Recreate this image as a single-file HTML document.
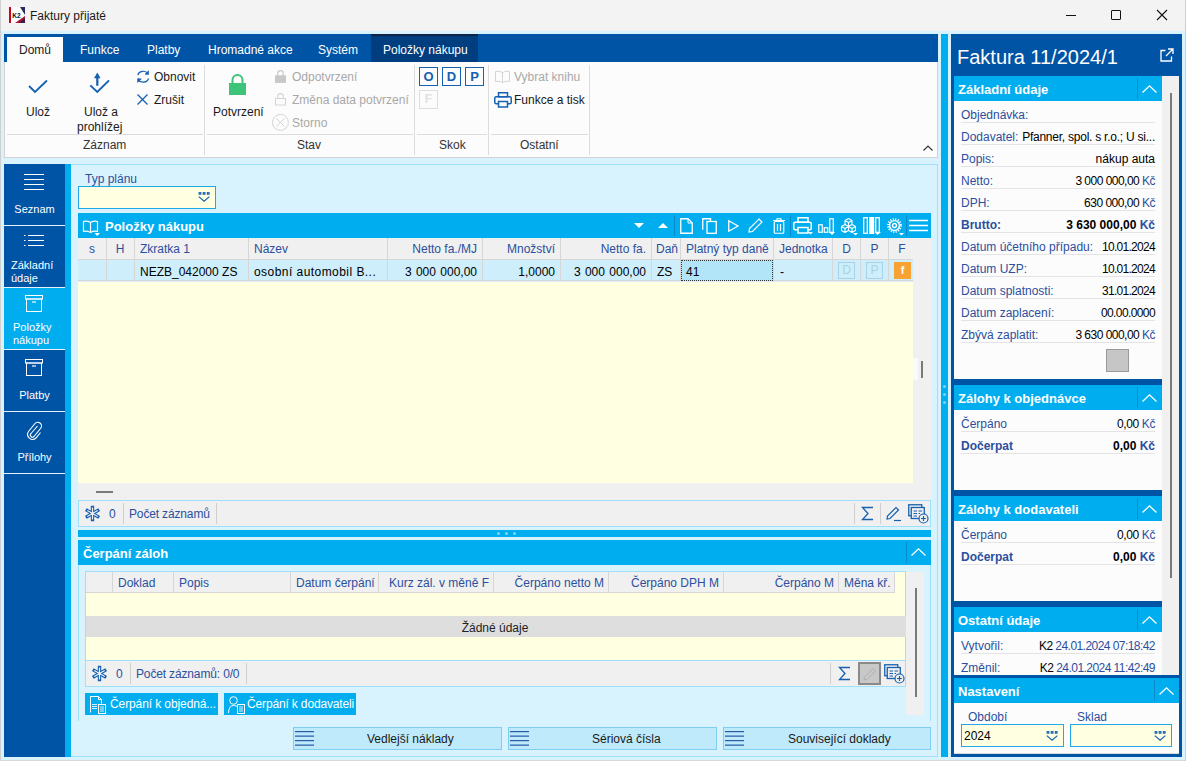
<!DOCTYPE html>
<html><head><meta charset="utf-8">
<style>
*{box-sizing:border-box;margin:0;padding:0}
html,body{width:1186px;height:761px;overflow:hidden;background:#d9f3fe;font-family:"Liberation Sans",sans-serif;font-size:12px;color:#000}
.a{position:absolute}
.t{position:absolute;white-space:nowrap;line-height:14px}
.w{color:#fff}
.b{font-weight:bold}
.lb{color:#2b4f9e}
.gr{color:#a8a8a8}
.lb2{color:#2b4f9e}
svg{position:absolute;overflow:visible}
</style></head><body>
<!-- window frame -->
<div class="a" style="left:0;top:0;width:1186px;height:31px;background:#f3f3f3"></div>
<div class="a" style="left:0;top:31px;width:1186px;height:730px;background:#d9f3fe"></div>
<div class="a" style="left:0;top:760px;width:1186px;height:1px;background:#d8d8d8"></div>
<div class="a" style="left:0;top:0;width:1px;height:761px;background:#cfcfcf"></div>
<div class="a" style="left:1185px;top:0;width:1px;height:761px;background:#cfcfcf"></div>

<!-- title -->
<svg style="left:9px;top:7px" width="16" height="16"><rect width="16" height="16" fill="#fff"/><rect width="2" height="16" fill="#d0021b"/><path d="M11 0H16V8Z" fill="#2b2a5e"/><path d="M16 9V16H6Z" fill="#b0102a"/><path d="M16 11V16H10Z" fill="#3a1f4a"/><text x="3.3" y="10.5" font-family="Liberation Sans" font-weight="bold" font-size="6.5" fill="#111">K2</text></svg>
<div class="t" style="left:30px;top:9px;color:#1a1a1a">Faktury přijaté</div>
<div class="a" style="left:1066px;top:15px;width:10px;height:1px;background:#111"></div>
<div class="a" style="left:1111px;top:10px;width:10px;height:10px;border:1px solid #111;border-radius:1px"></div>
<svg style="left:1157px;top:10px" width="10" height="10"><path d="M0 0L10 10M10 0L0 10" stroke="#111" stroke-width="1.1"/></svg>

<!-- ribbon tabs -->
<div class="a" style="left:4px;top:34px;width:934px;height:28px;background:#0054a6"></div>
<div class="a" style="left:7px;top:37px;width:56px;height:25px;background:#fcfcfc"></div>
<div class="a" style="left:371px;top:34px;width:107px;height:28px;background:#003e80;border-top:2px solid #0c2448"></div>
<div class="t" style="left:19px;top:43px;color:#1a1a1a">Domů</div>
<div class="t w" style="left:80px;top:43px">Funkce</div>
<div class="t w" style="left:147px;top:43px">Platby</div>
<div class="t w" style="left:208px;top:43px">Hromadné akce</div>
<div class="t w" style="left:318px;top:43px">Systém</div>
<div class="t w" style="left:383px;top:43px">Položky nákupu</div>

<!-- ribbon body -->
<div class="a" style="left:4px;top:62px;width:934px;height:96px;background:#fcfcfc;border:1px solid #d2d2d2;border-top:none"></div>
<!-- Zaznam group -->
<svg style="left:28px;top:79px" width="20" height="15"><path d="M1 7L7 13L19 1.5" fill="none" stroke="#1560b0" stroke-width="1.8"/></svg>
<div class="t" style="left:26px;top:105px;color:#1a1a1a">Ulož</div>
<svg style="left:88px;top:72px" width="22" height="22"><path d="M9.3 0.5L6 6.3H12.6Z" fill="#1560b0"/><path d="M9.3 5.5V13.8" stroke="#1560b0" stroke-width="2.2"/><path d="M2.3 13.4L9.3 20L21 8.3" fill="none" stroke="#1560b0" stroke-width="1.9"/></svg>
<div class="t" style="left:84px;top:105px;color:#1a1a1a">Ulož a</div>
<div class="t" style="left:77px;top:120px;color:#1a1a1a">prohlížej</div>
<svg style="left:137px;top:70px" width="13" height="13"><path d="M0.8 5A5.6 4.8 0 0 1 11 3.5M11.5 8.5A5.6 4.8 0 0 1 1.2 9.8" fill="none" stroke="#1560b0" stroke-width="1.2"/><path d="M11.6 0.8L11.6 4.5L8 4.2Z M0.6 12.4L0.6 8.6L4.3 9Z" fill="#1560b0" stroke="#1560b0" stroke-width="0.6"/></svg>
<div class="t" style="left:154px;top:70px;color:#1a1a1a">Obnovit</div>
<svg style="left:137px;top:94px" width="11" height="11"><path d="M0.5 0.5L10.5 10.5M10.5 0.5L0.5 10.5" stroke="#1560b0" stroke-width="1.3"/></svg>
<div class="t" style="left:154px;top:93px;color:#1a1a1a">Zrušit</div>
<div class="a" style="left:7px;top:134px;width:196px;height:1px;background:#dcdcdc"></div>
<div class="t" style="left:83px;top:138px;color:#333">Záznam</div>
<div class="a" style="left:204px;top:65px;width:1px;height:90px;background:#dcdcdc"></div>

<!-- Stav group -->
<svg style="left:228px;top:74px" width="19" height="22"><path d="M4.5 9V6A5 5 0 0 1 14.5 6V9" fill="none" stroke="#3ec479" stroke-width="2"/><rect x="1" y="9" width="17" height="12" fill="#3ec479"/></svg>
<div class="t" style="left:213px;top:105px;color:#1a1a1a">Potvrzení</div>
<svg style="left:275px;top:70px" width="12" height="14"><path d="M2.8 6V3.3A2.7 2.7 0 0 1 8.2 3.3V6" fill="none" stroke="#c8c8c8" stroke-width="1.2"/><rect x="0" y="5.3" width="11" height="7.6" fill="#c8c8c8"/></svg>
<div class="t gr" style="left:292px;top:70px">Odpotvrzení</div>
<svg style="left:275px;top:93px" width="12" height="14"><path d="M2.8 5.5V3.3A2.7 2.7 0 0 1 8.2 3.3V5.5" fill="none" stroke="#d4d4d4" stroke-width="1.1"/><rect x="0.5" y="5.5" width="10" height="6.5" fill="none" stroke="#d4d4d4" stroke-width="1"/></svg>
<div class="t gr" style="left:292px;top:93px">Změna data potvrzení</div>
<svg style="left:272px;top:114px" width="18" height="18"><circle cx="8.4" cy="8.4" r="8" fill="none" stroke="#d4d4d4" stroke-width="1"/><path d="M4.2 4.2L12.6 12.6M12.6 4.2L4.2 12.6" stroke="#d4d4d4" stroke-width="1"/></svg>
<div class="t gr" style="left:292px;top:116px">Storno</div>
<div class="a" style="left:207px;top:134px;width:206px;height:1px;background:#dcdcdc"></div>
<div class="t" style="left:297px;top:138px;color:#333">Stav</div>
<div class="a" style="left:414px;top:65px;width:1px;height:90px;background:#dcdcdc"></div>

<!-- Skok -->
<div class="a" style="left:419px;top:67px;width:19px;height:19px;border:1.5px solid #1560b0;color:#1560b0;font-weight:bold;font-size:13px;line-height:17px;text-align:center">O</div>
<div class="a" style="left:442px;top:67px;width:19px;height:19px;border:1.5px solid #1560b0;color:#1560b0;font-weight:bold;font-size:13px;line-height:17px;text-align:center">D</div>
<div class="a" style="left:465px;top:67px;width:19px;height:19px;border:1.5px solid #1560b0;color:#1560b0;font-weight:bold;font-size:13px;line-height:17px;text-align:center">P</div>
<div class="a" style="left:419px;top:90px;width:19px;height:19px;border:1px solid #dedede;color:#e0e0e0;font-weight:bold;font-size:12px;line-height:17px;text-align:center">F</div>
<div class="a" style="left:417px;top:134px;width:70px;height:1px;background:#dcdcdc"></div>
<div class="t" style="left:439px;top:138px;color:#333">Skok</div>
<div class="a" style="left:488px;top:65px;width:1px;height:90px;background:#dcdcdc"></div>

<!-- Ostatni -->
<svg style="left:495px;top:70px" width="15" height="13"><path d="M7.5 2.5Q4 0.5 0.5 1.5V11.5Q4 10.5 7.5 12.5Q11 10.5 14.5 11.5V1.5Q11 0.5 7.5 2.5V12.5" fill="none" stroke="#d4d4d4" stroke-width="1"/></svg>
<div class="t gr" style="left:514px;top:70px">Vybrat knihu</div>
<svg style="left:494px;top:92px" width="18" height="16"><rect x="4.5" y="0.75" width="9" height="4" fill="none" stroke="#1560b0" stroke-width="1.5"/><rect x="0.75" y="4.75" width="16.5" height="7" rx="1.5" fill="none" stroke="#1560b0" stroke-width="1.5"/><rect x="4.5" y="9.5" width="9" height="5.5" fill="#fcfcfc" stroke="#1560b0" stroke-width="1.5"/></svg>
<div class="t" style="left:514px;top:93px;color:#1a1a1a">Funkce a tisk</div>
<div class="a" style="left:491px;top:134px;width:97px;height:1px;background:#dcdcdc"></div>
<div class="t" style="left:520px;top:138px;color:#333">Ostatní</div>
<div class="a" style="left:589px;top:65px;width:1px;height:90px;background:#dcdcdc"></div>
<svg style="left:923px;top:145px" width="10" height="6"><path d="M0.5 5.5L5 1L9.5 5.5" fill="none" stroke="#333" stroke-width="1.1"/></svg>


<!-- left nav -->
<div class="a" style="left:4px;top:164px;width:61px;height:593px;background:#0054a6"></div>
<div class="a" style="left:65px;top:164px;width:6px;height:593px;background:#00aeef"></div>

<!-- left nav items -->
<div class="a" style="left:4px;top:225px;width:61px;height:1px;background:#e8f2fa"></div>
<div class="a" style="left:4px;top:287px;width:61px;height:1px;background:#e8f2fa"></div>
<div class="a" style="left:4px;top:288px;width:61px;height:61px;background:#00aeef"></div>
<div class="a" style="left:4px;top:349px;width:61px;height:1px;background:#e8f2fa"></div>
<div class="a" style="left:4px;top:411px;width:61px;height:1px;background:#e8f2fa"></div>
<div class="a" style="left:4px;top:473px;width:61px;height:1px;background:#e8f2fa"></div>
<svg style="left:24px;top:174px" width="20" height="17"><path d="M0 0.5H20M0 5.5H20M0 10.5H20M0 15.5H20" stroke="#fff" stroke-width="1"/></svg>
<div class="t w" style="left:4px;top:202px;width:61px;text-align:center;font-size:11px">Seznam</div>
<svg style="left:24px;top:235px" width="20" height="12"><path d="M4 0.5H20M4 5.5H20M4 10.5H20" stroke="#fff" stroke-width="1"/><path d="M0 0.5H1.5M0 5.5H1.5M0 10.5H1.5" stroke="#fff" stroke-width="1"/></svg>
<div class="t w" style="left:11px;top:258px;font-size:11px">Základní</div>
<div class="t w" style="left:11px;top:271px;font-size:11px">údaje</div>
<svg style="left:25px;top:295px" width="18" height="17"><rect x="0.5" y="0.5" width="17" height="3.5" fill="none" stroke="#fff" stroke-width="1"/><rect x="1.5" y="4" width="15" height="12.5" fill="none" stroke="#fff" stroke-width="1"/><path d="M7 7H11" stroke="#fff" stroke-width="1.2"/></svg>
<div class="t w" style="left:13px;top:320px;font-size:11px">Položky</div>
<div class="t w" style="left:13px;top:333px;font-size:11px">nákupu</div>
<svg style="left:25px;top:359px" width="18" height="17"><rect x="0.5" y="0.5" width="17" height="3.5" fill="none" stroke="#fff" stroke-width="1"/><rect x="1.5" y="4" width="15" height="12.5" fill="none" stroke="#fff" stroke-width="1"/><path d="M7 7H11" stroke="#fff" stroke-width="1.2"/></svg>
<div class="t w" style="left:4px;top:388px;width:61px;text-align:center;font-size:11px">Platby</div>
<svg style="left:26px;top:421px" width="17" height="19"><path d="M11.5 5L5 12.5A2 2 0 0 0 8 15.5L14.5 7.5A3.6 3.6 0 0 0 9 2.5L2.5 10.5A5 5 0 0 0 10 17L14.5 11.5" fill="none" stroke="#fff" stroke-width="1.1"/></svg>
<div class="t w" style="left:4px;top:450px;width:61px;text-align:center;font-size:11px">Přílohy</div>

<!-- form: typ planu -->
<div class="t lb" style="left:85px;top:172px">Typ plánu</div>
<div class="a" style="left:78px;top:186px;width:138px;height:23px;background:#ffffe1;border:1px solid #22a7e8"></div>
<svg style="left:198px;top:192px" width="13" height="11"><path d="M0.6 0H3.4V2.8H0.6ZM4.7 0H7.5V2.8H4.7ZM8.8 0H11.6V2.8H8.8Z" fill="#1560b0"/><path d="M1.5 1H2.5M5.6 1H6.6M9.7 1H10.7" stroke="#8fb7e0" stroke-width="0.8"/><path d="M0.8 4.6L6.1 9.2L11.4 4.6" fill="none" stroke="#1560b0" stroke-width="1.2"/></svg>

<!-- grid panel -->
<div class="a" style="left:78px;top:213px;width:853px;height:25px;background:#00aeef"></div>
<svg style="left:83px;top:220px" width="17" height="16"><path d="M7.5 2.5Q4 0.5 0.5 1.5V11.5Q4 10.5 7.5 12.5Q11 10.5 14.5 11.5V1.5Q11 0.5 7.5 2.5V12.5" fill="none" stroke="#fff" stroke-width="1.2"/><path d="M11.5 13H17L14.25 16Z" fill="#fff"/></svg>
<div class="t w b" style="left:105px;top:220px;font-size:13px">Položky nákupu</div>
<svg style="left:634px;top:223px" width="10" height="6"><path d="M0 0H10L5 5Z" fill="#fff"/></svg>
<svg style="left:658px;top:223px" width="10" height="6"><path d="M0 5H10L5 0Z" fill="#fff"/></svg>
<div class="a" style="left:674px;top:215px;width:1px;height:21px;background:#0a8acb"></div>
<svg style="left:680px;top:218px" width="13" height="16"><path d="M0.75 0.75H8L12.25 5V15.25H0.75Z" fill="none" stroke="#fff" stroke-width="1.3"/><path d="M8 0.75V5H12.25" fill="none" stroke="#fff" stroke-width="1"/></svg>
<svg style="left:702px;top:218px" width="15" height="16"><path d="M0.75 11.75V0.75H8.5V3.5" fill="none" stroke="#fff" stroke-width="1.3"/><rect x="5" y="3.5" width="9.25" height="11.75" fill="none" stroke="#fff" stroke-width="1.3"/></svg>
<svg style="left:728px;top:220px" width="11" height="12"><path d="M0.75 0.75L10 6L0.75 11.25Z" fill="none" stroke="#fff" stroke-width="1.3"/></svg>
<svg style="left:748px;top:218px" width="15" height="15"><path d="M1 14L1.5 10.5L11 1L14 4L4.5 13.5Z" fill="none" stroke="#fff" stroke-width="1.2"/></svg>
<svg style="left:773px;top:218px" width="12" height="16"><path d="M0 2.5H12M4 2.5V0.75H8V2.5" fill="none" stroke="#fff" stroke-width="1.2"/><rect x="1.25" y="3.5" width="9.5" height="11.75" rx="1" fill="none" stroke="#fff" stroke-width="1.2"/><path d="M4.5 6V13M7.5 6V13" stroke="#fff" stroke-width="1.2"/></svg>
<div class="a" style="left:790px;top:215px;width:1px;height:21px;background:#0a8acb"></div>
<svg style="left:793px;top:217px" width="20" height="18"><rect x="5" y="0.75" width="10" height="4.5" fill="none" stroke="#fff" stroke-width="1.5"/><rect x="0.75" y="5.25" width="17.5" height="7.5" rx="1.5" fill="none" stroke="#fff" stroke-width="1.5"/><rect x="5" y="10.5" width="10" height="5.5" fill="#00aeef" stroke="#fff" stroke-width="1.5"/><path d="M15 15H20L17.5 17.5Z" fill="#fff"/></svg>
<svg style="left:818px;top:218px" width="18" height="17"><rect x="0.75" y="6.75" width="3.5" height="7.5" fill="none" stroke="#fff" stroke-width="1.2"/><rect x="6.25" y="9.75" width="3.5" height="4.5" fill="none" stroke="#fff" stroke-width="1.2"/><rect x="11.75" y="0.75" width="3.5" height="13.5" fill="none" stroke="#fff" stroke-width="1.2"/><path d="M11 14H17L14 17Z" fill="#fff"/></svg>
<svg style="left:841px;top:218px" width="18" height="18"><path d="M7.5 0.5L11.0 2.5V6.5L7.5 8.5L4.0 6.5V2.5Z M4.0 2.5L7.5 4.5L11.0 2.5M7.5 4.5V8.5 M4 6.5L7.5 8.5V12.5L4 14.5L0.5 12.5V8.5Z M0.5 8.5L4 10.5L7.5 8.5M4 10.5V14.5 M11 6.5L14.5 8.5V12.5L11 14.5L7.5 12.5V8.5Z M7.5 8.5L11 10.5L14.5 8.5M11 10.5V14.5" fill="none" stroke="#fff" stroke-width="1.1" stroke-linejoin="round"/><path d="M12 15H17L14.5 17.5Z" fill="#fff"/></svg>
<svg style="left:863px;top:217px" width="19" height="19"><rect x="0.7" y="0.7" width="3.6" height="15.6" fill="none" stroke="#fff" stroke-width="1.3"/><rect x="6.2" y="0" width="5" height="17" fill="#fff"/><rect x="12.7" y="0.7" width="3.6" height="14.6" fill="none" stroke="#fff" stroke-width="1.3"/><path d="M11.5 15H18L14.5 18Z" fill="#fff"/></svg>
<svg style="left:887px;top:218px" width="18" height="18"><circle cx="7.5" cy="7.5" r="6.4" fill="none" stroke="#fff" stroke-width="2" stroke-dasharray="1.1 1.41"/><circle cx="7.5" cy="7.5" r="4.9" fill="none" stroke="#fff" stroke-width="1.4"/><circle cx="7.5" cy="7.5" r="2" fill="none" stroke="#fff" stroke-width="1.3"/><path d="M12 15H17L14.5 17.5Z" fill="#fff"/></svg>
<div class="a" style="left:906px;top:215px;width:1px;height:21px;background:#0a8acb"></div>
<svg style="left:909px;top:219px" width="19" height="13"><path d="M0 1.5H19M0 6.5H19M0 11.5H19" stroke="#fff" stroke-width="1.3"/></svg>

<!-- grid header row -->
<div class="a" style="left:78px;top:238px;width:835px;height:22px;background:#f0f0f0;border-bottom:1px solid #d6d6d6"></div>
<div class="a" style="left:78px;top:260px;width:835px;height:21px;background:#cdeefa;border-bottom:1px solid #d6d6d6"></div>
<div class="a" style="left:78px;top:282px;width:835px;height:201px;background:#ffffe1"></div>
<!-- column separators -->
<div class="a" style="left:106px;top:238px;width:1px;height:43px;background:#d6d6d6"></div>
<div class="a" style="left:134px;top:238px;width:1px;height:43px;background:#d6d6d6"></div>
<div class="a" style="left:248px;top:238px;width:1px;height:43px;background:#d6d6d6"></div>
<div class="a" style="left:387px;top:238px;width:1px;height:43px;background:#d6d6d6"></div>
<div class="a" style="left:482px;top:238px;width:1px;height:43px;background:#d6d6d6"></div>
<div class="a" style="left:560px;top:238px;width:1px;height:43px;background:#d6d6d6"></div>
<div class="a" style="left:651px;top:238px;width:1px;height:43px;background:#d6d6d6"></div>
<div class="a" style="left:680px;top:238px;width:1px;height:43px;background:#d6d6d6"></div>
<div class="a" style="left:773px;top:238px;width:1px;height:43px;background:#d6d6d6"></div>
<div class="a" style="left:832px;top:238px;width:1px;height:43px;background:#d6d6d6"></div>
<div class="a" style="left:860px;top:238px;width:1px;height:43px;background:#d6d6d6"></div>
<div class="a" style="left:888px;top:238px;width:1px;height:43px;background:#d6d6d6"></div>
<div class="t lb" style="left:78px;top:242px;width:28px;text-align:center">s</div>
<div class="t lb" style="left:106px;top:242px;width:28px;text-align:center">H</div>
<div class="t lb" style="left:140px;top:242px">Zkratka 1</div>
<div class="t lb" style="left:254px;top:242px">Název</div>
<div class="t lb" style="left:388px;top:242px;width:89px;text-align:right">Netto fa./MJ</div>
<div class="t lb" style="left:483px;top:242px;width:72px;text-align:right">Množství</div>
<div class="t lb" style="left:561px;top:242px;width:85px;text-align:right">Netto fa.</div>
<div class="t lb" style="left:656px;top:242px">Daň</div>
<div class="t lb" style="left:686px;top:242px">Platný typ daně</div>
<div class="t lb" style="left:779px;top:242px">Jednotka</div>
<div class="t lb" style="left:833px;top:242px;width:27px;text-align:center">D</div>
<div class="t lb" style="left:861px;top:242px;width:27px;text-align:center">P</div>
<div class="t lb" style="left:889px;top:242px;width:26px;text-align:center">F</div>
<!-- row -->
<div class="a" style="left:681px;top:260px;width:92px;height:21px;background:#b3e5f8;border:1px dotted #333"></div>
<div class="t" style="left:140px;top:265px">NEZB_042000 ZS</div>
<div class="t" style="left:254px;top:265px;letter-spacing:0.45px">osobní automobil B...</div>
<div class="t" style="left:388px;top:265px;width:89px;text-align:right;word-spacing:1px">3 000 000,00</div>
<div class="t" style="left:483px;top:265px;width:72px;text-align:right">1,0000</div>
<div class="t" style="left:561px;top:265px;width:85px;text-align:right;word-spacing:1px">3 000 000,00</div>
<div class="t" style="left:657px;top:265px">ZS</div>
<div class="t" style="left:686px;top:265px">41</div>
<div class="t" style="left:780px;top:265px">-</div>
<div class="a" style="left:838px;top:262px;width:17px;height:17px;border:1px solid #a9d3e4;color:#a9d3e4;font-size:12px;line-height:15px;text-align:center">D</div>
<div class="a" style="left:866px;top:262px;width:17px;height:17px;border:1px solid #a9d3e4;color:#a9d3e4;font-size:12px;line-height:15px;text-align:center">P</div>
<div class="a" style="left:894px;top:262px;width:17px;height:17px;background:#f7a233;color:#fff;font-weight:bold;font-size:11px;line-height:17px;text-align:center">f</div>

<!-- scrollbars -->
<div class="a" style="left:913px;top:238px;width:18px;height:262px;background:#f0f0f0"></div>
<div class="a" style="left:913px;top:358px;width:5px;height:22px;background:#fafafa"></div>
<div class="a" style="left:921px;top:361px;width:2px;height:17px;background:#7a7a7a"></div>
<div class="a" style="left:78px;top:483px;width:835px;height:17px;background:#f0f0f0"></div>
<div class="a" style="left:96px;top:491px;width:17px;height:2px;background:#7a7a7a"></div>
<!-- footer -->
<div class="a" style="left:78px;top:500px;width:853px;height:27px;background:#f0f0f0;border:1px solid #9edff9"></div>
<svg style="left:85px;top:506px" width="16" height="16"><path d="M7.50 1.50L7.50 13.50M12.70 4.50L2.30 10.50M12.70 10.50L2.30 4.50" stroke="#1560b0" stroke-width="3.4" stroke-linecap="square"/><path d="M7.50 1.50L7.50 13.50M12.70 4.50L2.30 10.50M12.70 10.50L2.30 4.50" stroke="#f0f0f0" stroke-width="1.2" stroke-linecap="butt"/><circle cx="7.5" cy="7.5" r="1.3" fill="#f0f0f0"/></svg>
<div class="t lb" style="left:109px;top:507px">0</div>
<div class="a" style="left:123px;top:503px;width:1px;height:21px;background:#cfcfcf"></div>
<div class="t lb" style="left:129px;top:507px;letter-spacing:-0.15px">Počet záznamů</div>
<div class="a" style="left:216px;top:503px;width:1px;height:21px;background:#cfcfcf"></div>
<div class="a" style="left:854px;top:503px;width:1px;height:21px;background:#cfcfcf"></div>
<svg style="left:861px;top:506px" width="13" height="15"><path d="M12 1.5H1.5L7 7.5L1.5 13.5H12" fill="none" stroke="#1560b0" stroke-width="1.3"/></svg>
<div class="a" style="left:880px;top:503px;width:1px;height:21px;background:#cfcfcf"></div>
<svg style="left:886px;top:506px" width="16" height="16"><path d="M1 13L1.5 10L10 1.5L12.5 4L4 12.5Z" fill="none" stroke="#1560b0" stroke-width="1.2"/><path d="M8 14.5H15" stroke="#1560b0" stroke-width="1.2"/></svg>
<svg style="left:908px;top:504px" width="21" height="20"><rect x="0.75" y="0.75" width="13" height="11" fill="none" stroke="#1560b0" stroke-width="1.3"/><rect x="3.25" y="3.5" width="13" height="11" fill="#f0f0f0" stroke="#1560b0" stroke-width="1.3"/><path d="M5.5 7H9M5.5 9.5H9M5.5 12H9M10.5 7H14M10.5 9.5H12" stroke="#1560b0" stroke-width="1"/><circle cx="15.5" cy="14.5" r="4.5" fill="#f0f0f0" stroke="#1560b0" stroke-width="1.2"/><path d="M15.5 12V17M13 14.5H18" stroke="#1560b0" stroke-width="1.2"/></svg>

<!-- splitter -->
<div class="a" style="left:78px;top:530px;width:853px;height:7px;background:#00aeef"></div>
<div class="a" style="left:497px;top:532px;width:3px;height:3px;border-radius:2px;background:#7dd3f5"></div>
<div class="a" style="left:505px;top:532px;width:3px;height:3px;border-radius:2px;background:#7dd3f5"></div>
<div class="a" style="left:513px;top:532px;width:3px;height:3px;border-radius:2px;background:#7dd3f5"></div>

<!-- cerpani zaloh -->
<div class="a" style="left:78px;top:540px;width:853px;height:25px;background:#00aeef"></div>
<div class="t w b" style="left:83px;top:547px;font-size:13px">Čerpání záloh</div>
<div class="a" style="left:906px;top:542px;width:1px;height:21px;background:#0a8acb"></div>
<svg style="left:911px;top:548px" width="15" height="8"><path d="M0.5 7.5L7.5 0.8L14.5 7.5" fill="none" stroke="#fff" stroke-width="1.3"/></svg>
<div class="a" style="left:78px;top:565px;width:1px;height:156px;background:#9edff9"></div>
<div class="a" style="left:930px;top:565px;width:1px;height:156px;background:#9edff9"></div>
<div class="a" style="left:85px;top:571px;width:821px;height:90px;background:#ffffe1;border:1px solid #9edff9"></div>
<div class="a" style="left:86px;top:572px;width:809px;height:21px;background:#f0f0f0;border-bottom:1px solid #d6d6d6"></div>
<div class="a" style="left:112px;top:572px;width:1px;height:21px;background:#d6d6d6"></div>
<div class="a" style="left:173px;top:572px;width:1px;height:21px;background:#d6d6d6"></div>
<div class="a" style="left:290px;top:572px;width:1px;height:21px;background:#d6d6d6"></div>
<div class="a" style="left:378px;top:572px;width:1px;height:21px;background:#d6d6d6"></div>
<div class="a" style="left:493px;top:572px;width:1px;height:21px;background:#d6d6d6"></div>
<div class="a" style="left:608px;top:572px;width:1px;height:21px;background:#d6d6d6"></div>
<div class="a" style="left:723px;top:572px;width:1px;height:21px;background:#d6d6d6"></div>
<div class="a" style="left:838px;top:572px;width:1px;height:21px;background:#d6d6d6"></div>
<div class="a" style="left:894px;top:572px;width:1px;height:21px;background:#d6d6d6"></div>
<div class="t lb" style="left:118px;top:576px">Doklad</div>
<div class="t lb" style="left:179px;top:576px">Popis</div>
<div class="t lb" style="left:296px;top:576px">Datum čerpání</div>
<div class="t lb" style="left:379px;top:576px;width:110px;text-align:right">Kurz zál. v měně F</div>
<div class="t lb" style="left:494px;top:576px;width:110px;text-align:right">Čerpáno netto M</div>
<div class="t lb" style="left:609px;top:576px;width:110px;text-align:right">Čerpáno DPH M</div>
<div class="t lb" style="left:724px;top:576px;width:110px;text-align:right">Čerpáno M</div>
<div class="t lb" style="left:844px;top:576px">Měna kř.</div>
<div class="a" style="left:86px;top:616px;width:820px;height:21px;background:#dedede"></div>
<div class="t" style="left:85px;top:621px;width:820px;text-align:center;color:#222">Žádné údaje</div>
<!-- sub vscroll -->
<div class="a" style="left:906px;top:572px;width:18px;height:143px;background:#f0f0f0"></div>
<div class="a" style="left:915px;top:588px;width:2px;height:109px;background:#7a7a7a"></div>
<!-- sub footer -->
<div class="a" style="left:85px;top:660px;width:821px;height:27px;background:#f0f0f0;border:1px solid #9edff9"></div>
<svg style="left:92px;top:666px" width="16" height="16"><path d="M7.50 1.50L7.50 13.50M12.70 4.50L2.30 10.50M12.70 10.50L2.30 4.50" stroke="#1560b0" stroke-width="3.4" stroke-linecap="square"/><path d="M7.50 1.50L7.50 13.50M12.70 4.50L2.30 10.50M12.70 10.50L2.30 4.50" stroke="#f0f0f0" stroke-width="1.2" stroke-linecap="butt"/><circle cx="7.5" cy="7.5" r="1.3" fill="#f0f0f0"/></svg>
<div class="t lb" style="left:116px;top:667px">0</div>
<div class="a" style="left:130px;top:663px;width:1px;height:21px;background:#cfcfcf"></div>
<div class="t lb" style="left:136px;top:667px;letter-spacing:-0.15px">Počet záznamů: 0/0</div>
<div class="a" style="left:246px;top:663px;width:1px;height:21px;background:#cfcfcf"></div>
<div class="a" style="left:830px;top:663px;width:1px;height:21px;background:#cfcfcf"></div>
<svg style="left:838px;top:666px" width="13" height="15"><path d="M12 1.5H1.5L7 7.5L1.5 13.5H12" fill="none" stroke="#1560b0" stroke-width="1.3"/></svg>
<div class="a" style="left:858px;top:662px;width:23px;height:23px;background:#c8c8c8;border:2px solid #8a8a8a"></div>
<svg style="left:863px;top:667px" width="14" height="14"><path d="M1 13L1.5 10L10 1.5L12.5 4L4 12.5Z" fill="none" stroke="#b0b0b0" stroke-width="1"/></svg>
<svg style="left:884px;top:664px" width="21" height="20"><rect x="0.75" y="0.75" width="13" height="11" fill="none" stroke="#1560b0" stroke-width="1.3"/><rect x="3.25" y="3.5" width="13" height="11" fill="#f0f0f0" stroke="#1560b0" stroke-width="1.3"/><path d="M5.5 7H9M5.5 9.5H9M5.5 12H9M10.5 7H14M10.5 9.5H12" stroke="#1560b0" stroke-width="1"/><circle cx="15.5" cy="14.5" r="4.5" fill="#f0f0f0" stroke="#1560b0" stroke-width="1.2"/><path d="M15.5 12V17M13 14.5H18" stroke="#1560b0" stroke-width="1.2"/></svg>
<!-- buttons -->
<div class="a" style="left:85px;top:693px;width:133px;height:22px;background:#00aeef"></div>
<svg style="left:90px;top:696px" width="17" height="19"><path d="M0.5 16.5V0.5H8.5L11.5 3.5V7.5M8.5 0.5V3.5H11.5" fill="none" stroke="#fff" stroke-width="1"/><path d="M2 8.5H7M2 10.5H7M2 12.5H7" stroke="#d8f3ff" stroke-width="1.2"/><rect x="8.5" y="8.5" width="7" height="9" fill="#00aeef" stroke="#fff" stroke-width="1"/><path d="M10 11H14M10 13H14M10 15H14" stroke="#d8f3ff" stroke-width="1"/></svg>
<div class="t w" style="left:110px;top:697px;letter-spacing:-0.1px">Čerpání k objedná...</div>
<div class="a" style="left:224px;top:693px;width:132px;height:22px;background:#00aeef"></div>
<svg style="left:228px;top:696px" width="18" height="19"><circle cx="5.5" cy="4.5" r="3.8" fill="none" stroke="#fff" stroke-width="1"/><path d="M0.5 17Q0.8 9.5 5.5 9.5Q8.2 9.5 9 10.5" fill="none" stroke="#fff" stroke-width="1"/><rect x="9.5" y="8.5" width="7" height="9" fill="#00aeef" stroke="#fff" stroke-width="1"/><path d="M11 11H15M11 13H15M11 15H15" stroke="#d8f3ff" stroke-width="1"/></svg>
<div class="t w" style="left:247px;top:697px;letter-spacing:-0.15px">Čerpání k dodavateli</div>

<!-- bottom buttons -->
<div class="a" style="left:293px;top:727px;width:209px;height:23px;background:#bfeafb;border:1px solid #7fcdf0"></div>
<svg style="left:295px;top:731px" width="19" height="17"><path d="M0 0.7H19M0 5.2H19M0 9.7H19M0 14.2H19" stroke="#2a5fa8" stroke-width="1.3"/></svg>
<div class="t" style="left:367px;top:732px;color:#1a1a1a">Vedlejší náklady</div>
<div class="a" style="left:508px;top:727px;width:209px;height:23px;background:#bfeafb;border:1px solid #7fcdf0"></div>
<svg style="left:510px;top:731px" width="19" height="17"><path d="M0 0.7H19M0 5.2H19M0 9.7H19M0 14.2H19" stroke="#2a5fa8" stroke-width="1.3"/></svg>
<div class="t" style="left:592px;top:732px;color:#1a1a1a">Sériová čísla</div>
<div class="a" style="left:723px;top:727px;width:208px;height:23px;background:#bfeafb;border:1px solid #7fcdf0"></div>
<svg style="left:725px;top:731px" width="19" height="17"><path d="M0 0.7H19M0 5.2H19M0 9.7H19M0 14.2H19" stroke="#2a5fa8" stroke-width="1.3"/></svg>
<div class="t" style="left:788px;top:732px;color:#1a1a1a">Související doklady</div>
<div class="a" style="left:71px;top:756px;width:867px;height:1px;background:#9edff9"></div>
<div class="a" style="left:71px;top:164px;width:867px;height:1px;background:#9edff9"></div>
<div class="a" style="left:937px;top:164px;width:1px;height:593px;background:#9edff9"></div>



<!-- right strip -->
<div class="a" style="left:941px;top:34px;width:7px;height:723px;background:#00aeef"></div>

<!-- right panel -->
<div class="a" style="left:951px;top:34px;width:231px;height:723px;background:#0054a6"></div>
<div class="t w" style="left:957px;top:45px;font-size:20px;line-height:24px">Faktura 11/2024/1</div>
<svg style="left:1160px;top:48px" width="14" height="14"><path d="M5.5 2.5H1V13H11.5V8.5" fill="none" stroke="#fff" stroke-width="1.3"/><path d="M8 1H13V6M13 1L6 8" fill="none" stroke="#fff" stroke-width="1.3"/></svg>
<div class="a" style="left:1162px;top:76px;width:17px;height:600px;background:#f0f0f0"></div>
<div class="a" style="left:1170px;top:93px;width:2px;height:485px;background:#7a7a7a"></div>
<div class="a" style="left:954px;top:76px;width:208px;height:25px;background:#00aeef"></div>
<div class="t w b" style="left:958px;top:83px;font-size:13px">Základní údaje</div>
<div class="a" style="left:1137px;top:78px;width:1px;height:21px;background:#0a8acb"></div>
<svg style="left:1142px;top:85px" width="15" height="8"><path d="M0.5 7.5L7.5 0.8L14.5 7.5" fill="none" stroke="#fff" stroke-width="1.3"/></svg>
<div class="a" style="left:954px;top:101px;width:208px;height:278px;background:#fcfcfc"></div>
<div class="t lb" style="left:961px;top:108px">Objednávka:</div>
<div class="a" style="left:961px;top:122px;width:194px;height:1px;background:#e4e4e4"></div>
<div class="t lb" style="left:961px;top:130px">Dodavatel:</div>
<div class="t" style="left:1000px;top:130px;width:1155px;left:auto;right:31px;text-align:right;letter-spacing:-0.24px">Pfanner, spol. s r.o.; U si...</div>
<div class="a" style="left:961px;top:144px;width:194px;height:1px;background:#e4e4e4"></div>
<div class="t lb" style="left:961px;top:152px">Popis:</div>
<div class="t" style="left:1000px;top:152px;width:1155px;left:auto;right:31px;text-align:right">nákup auta</div>
<div class="a" style="left:961px;top:166px;width:194px;height:1px;background:#e4e4e4"></div>
<div class="t lb" style="left:961px;top:174px">Netto:</div>
<div class="t" style="left:1000px;top:174px;width:1155px;left:auto;right:31px;text-align:right;letter-spacing:-0.52px">3 000 000,00 <span class=lb2>Kč</span></div>
<div class="a" style="left:961px;top:188px;width:194px;height:1px;background:#e4e4e4"></div>
<div class="t lb" style="left:961px;top:196px">DPH:</div>
<div class="t" style="left:1000px;top:196px;width:1155px;left:auto;right:31px;text-align:right;letter-spacing:-0.5px">630 000,00 <span class=lb2>Kč</span></div>
<div class="a" style="left:961px;top:210px;width:194px;height:1px;background:#e4e4e4"></div>
<div class="t lb b" style="left:961px;top:218px">Brutto:</div>
<div class="t b" style="left:1000px;top:218px;width:1155px;left:auto;right:31px;text-align:right">3 630 000,00 <span class=lb2>Kč</span></div>
<div class="a" style="left:961px;top:232px;width:194px;height:1px;background:#e4e4e4"></div>
<div class="t lb" style="left:961px;top:240px">Datum účetního případu:</div>
<div class="t" style="left:1000px;top:240px;width:1155px;left:auto;right:31px;text-align:right;letter-spacing:-0.7px">10.01.2024</div>
<div class="a" style="left:961px;top:254px;width:194px;height:1px;background:#e4e4e4"></div>
<div class="t lb" style="left:961px;top:262px">Datum UZP:</div>
<div class="t" style="left:1000px;top:262px;width:1155px;left:auto;right:31px;text-align:right;letter-spacing:-0.7px">10.01.2024</div>
<div class="a" style="left:961px;top:276px;width:194px;height:1px;background:#e4e4e4"></div>
<div class="t lb" style="left:961px;top:284px">Datum splatnosti:</div>
<div class="t" style="left:1000px;top:284px;width:1155px;left:auto;right:31px;text-align:right;letter-spacing:-0.7px">31.01.2024</div>
<div class="a" style="left:961px;top:298px;width:194px;height:1px;background:#e4e4e4"></div>
<div class="t lb" style="left:961px;top:306px">Datum zaplacení:</div>
<div class="t" style="left:1000px;top:306px;width:1155px;left:auto;right:31px;text-align:right;letter-spacing:-0.6px">00.00.0000</div>
<div class="a" style="left:961px;top:320px;width:194px;height:1px;background:#e4e4e4"></div>
<div class="t lb" style="left:961px;top:328px">Zbývá zaplatit:</div>
<div class="t" style="left:1000px;top:328px;width:1155px;left:auto;right:31px;text-align:right;letter-spacing:-0.52px">3 630 000,00 <span class=lb2>Kč</span></div>
<div class="a" style="left:961px;top:342px;width:194px;height:1px;background:#e4e4e4"></div>
<div class="a" style="left:1106px;top:349px;width:23px;height:23px;background:#c6c6c6;border:1px solid #9a9a9a"></div>
<div class="a" style="left:954px;top:385px;width:208px;height:25px;background:#00aeef"></div>
<div class="t w b" style="left:958px;top:392px;font-size:13px">Zálohy k objednávce</div>
<div class="a" style="left:1137px;top:387px;width:1px;height:21px;background:#0a8acb"></div>
<svg style="left:1142px;top:394px" width="15" height="8"><path d="M0.5 7.5L7.5 0.8L14.5 7.5" fill="none" stroke="#fff" stroke-width="1.3"/></svg>
<div class="a" style="left:954px;top:410px;width:208px;height:80px;background:#fcfcfc"></div>
<div class="t lb" style="left:961px;top:417px">Čerpáno</div>
<div class="t" style="left:1000px;top:417px;width:1155px;left:auto;right:31px;text-align:right;letter-spacing:-0.4px">0,00 <span class=lb2>Kč</span></div>
<div class="a" style="left:961px;top:431px;width:194px;height:1px;background:#e4e4e4"></div>
<div class="t lb b" style="left:961px;top:439px">Dočerpat</div>
<div class="t b" style="left:1000px;top:439px;width:1155px;left:auto;right:31px;text-align:right">0,00 <span class=lb2>Kč</span></div>
<div class="a" style="left:961px;top:453px;width:194px;height:1px;background:#e4e4e4"></div>
<div class="a" style="left:954px;top:496px;width:208px;height:25px;background:#00aeef"></div>
<div class="t w b" style="left:958px;top:503px;font-size:13px">Zálohy k dodavateli</div>
<div class="a" style="left:1137px;top:498px;width:1px;height:21px;background:#0a8acb"></div>
<svg style="left:1142px;top:505px" width="15" height="8"><path d="M0.5 7.5L7.5 0.8L14.5 7.5" fill="none" stroke="#fff" stroke-width="1.3"/></svg>
<div class="a" style="left:954px;top:521px;width:208px;height:80px;background:#fcfcfc"></div>
<div class="t lb" style="left:961px;top:528px">Čerpáno</div>
<div class="t" style="left:1000px;top:528px;width:1155px;left:auto;right:31px;text-align:right;letter-spacing:-0.4px">0,00 <span class=lb2>Kč</span></div>
<div class="a" style="left:961px;top:542px;width:194px;height:1px;background:#e4e4e4"></div>
<div class="t lb b" style="left:961px;top:550px">Dočerpat</div>
<div class="t b" style="left:1000px;top:550px;width:1155px;left:auto;right:31px;text-align:right">0,00 <span class=lb2>Kč</span></div>
<div class="a" style="left:961px;top:564px;width:194px;height:1px;background:#e4e4e4"></div>
<div class="a" style="left:954px;top:607px;width:208px;height:25px;background:#00aeef"></div>
<div class="t w b" style="left:958px;top:614px;font-size:13px">Ostatní údaje</div>
<div class="a" style="left:1137px;top:609px;width:1px;height:21px;background:#0a8acb"></div>
<svg style="left:1142px;top:616px" width="15" height="8"><path d="M0.5 7.5L7.5 0.8L14.5 7.5" fill="none" stroke="#fff" stroke-width="1.3"/></svg>
<div class="a" style="left:954px;top:632px;width:208px;height:44px;background:#fcfcfc"></div>
<div class="t lb" style="left:961px;top:639px">Vytvořil:</div>
<div class="t" style="left:1000px;top:639px;width:1155px;left:auto;right:31px;text-align:right;letter-spacing:-0.55px">K2 <span class=lb2>24.01.2024 07:18:42</span></div>
<div class="a" style="left:961px;top:653px;width:194px;height:1px;background:#e4e4e4"></div>
<div class="t lb" style="left:961px;top:661px">Změnil:</div>
<div class="t" style="left:1000px;top:661px;width:1155px;left:auto;right:31px;text-align:right;letter-spacing:-0.55px">K2 <span class=lb2>24.01.2024 11:42:49</span></div>
<div class="a" style="left:961px;top:675px;width:194px;height:1px;background:#e4e4e4"></div>
<div class="a" style="left:951px;top:675px;width:231px;height:3px;background:#0054a6"></div>
<div class="a" style="left:954px;top:678px;width:225px;height:25px;background:#00aeef"></div>
<div class="t w b" style="left:958px;top:685px;font-size:13px">Nastavení</div>
<div class="a" style="left:1154px;top:680px;width:1px;height:21px;background:#0a8acb"></div>
<svg style="left:1159px;top:687px" width="15" height="8"><path d="M0.5 7.5L7.5 0.8L14.5 7.5" fill="none" stroke="#fff" stroke-width="1.3"/></svg>
<div class="a" style="left:954px;top:703px;width:225px;height:51px;background:#fcfcfc;border-bottom:1px solid #d8d8d8"></div>
<div class="t lb" style="left:968px;top:710px">Období</div>
<div class="t lb" style="left:1077px;top:710px">Sklad</div>
<div class="a" style="left:961px;top:724px;width:103px;height:23px;background:#ffffe1;border:1px solid #22a7e8"></div>
<div class="t" style="left:964px;top:729px">2024</div>
<svg style="left:1046px;top:731px" width="13" height="11"><path d="M0.6 0H3.4V2.8H0.6ZM4.7 0H7.5V2.8H4.7ZM8.8 0H11.6V2.8H8.8Z" fill="#1560b0"/><path d="M1.5 1H2.5M5.6 1H6.6M9.7 1H10.7" stroke="#8fb7e0" stroke-width="0.8"/><path d="M0.8 4.6L6.1 9.2L11.4 4.6" fill="none" stroke="#1560b0" stroke-width="1.2"/></svg>
<div class="a" style="left:1070px;top:724px;width:102px;height:23px;background:#ffffe1;border:1px solid #22a7e8"></div>
<svg style="left:1154px;top:731px" width="13" height="11"><path d="M0.6 0H3.4V2.8H0.6ZM4.7 0H7.5V2.8H4.7ZM8.8 0H11.6V2.8H8.8Z" fill="#1560b0"/><path d="M1.5 1H2.5M5.6 1H6.6M9.7 1H10.7" stroke="#8fb7e0" stroke-width="0.8"/><path d="M0.8 4.6L6.1 9.2L11.4 4.6" fill="none" stroke="#1560b0" stroke-width="1.2"/></svg>
<div class="a" style="left:943px;top:385px;width:3px;height:3px;border-radius:2px;background:#7dd3f5"></div>
<div class="a" style="left:943px;top:393px;width:3px;height:3px;border-radius:2px;background:#7dd3f5"></div>
<div class="a" style="left:943px;top:401px;width:3px;height:3px;border-radius:2px;background:#7dd3f5"></div>

</body></html>
